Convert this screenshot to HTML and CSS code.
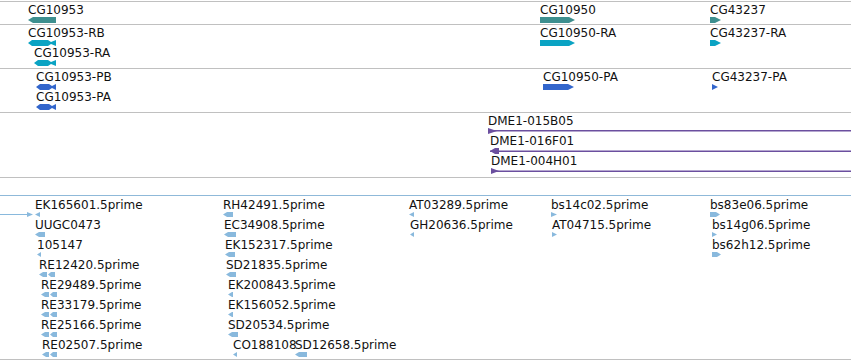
FILE: index.html
```html
<!DOCTYPE html>
<html>
<head>
<meta charset="utf-8">
<link rel="stylesheet" href="styles.css">
</head>
<body>
<div class="view">
  <div class="track t1">
    <div class="lane">
      <div class="feat" style="left:28px"><span class="lbl">CG10953</span><svg class="g gene" width="28" height="6"><polygon points="0,3 5,0 28,0 28,6 5,6"/></svg></div>
      <div class="feat" style="left:540px"><span class="lbl">CG10950</span><svg class="g gene" width="35" height="6"><polygon points="0,0 29,0 35,3 29,6 0,6"/></svg></div>
      <div class="feat" style="left:710px"><span class="lbl">CG43237</span><svg class="g gene" width="11" height="6"><polygon points="0,0 5,0 11,3 5,6 0,6"/></svg></div>
    </div>
  </div>
  <div class="track t2">
    <div class="lane">
      <div class="feat" style="left:28px"><span class="lbl">CG10953-RB</span><svg class="g tx" width="28" height="6"><polygon points="0,3 4,0 20,0 23,2 28,0 28,6 23,4 20,6 4,6"/></svg></div>
      <div class="feat" style="left:540px"><span class="lbl">CG10950-RA</span><svg class="g tx" width="35" height="6"><polygon points="0,0 29,0 35,3 29,6 0,6"/></svg></div>
      <div class="feat" style="left:710px"><span class="lbl">CG43237-RA</span><svg class="g tx" width="11" height="6"><polygon points="0,0 5,0 11,3 5,6 0,6"/></svg></div>
    </div>
    <div class="lane">
      <div class="feat" style="left:34px"><span class="lbl">CG10953-RA</span><svg class="g tx" width="22" height="6"><polygon points="0,3 4,0 14,0 17,2 22,0 22,6 17,4 14,6 4,6"/></svg></div>
    </div>
  </div>
  <div class="track t3">
    <div class="lane">
      <div class="feat" style="left:36px"><span class="lbl">CG10953-PB</span><svg class="g pep" width="20" height="6"><polygon points="0,3 4,0 13,0 16,2 20,0 20,6 16,4 13,6 4,6"/></svg></div>
      <div class="feat" style="left:543px"><span class="lbl">CG10950-PA</span><svg class="g pep" width="31" height="6"><polygon points="0,0 25,0 31,3 25,6 0,6"/></svg></div>
      <div class="feat" style="left:712px"><span class="lbl">CG43237-PA</span><svg class="g pep" width="6" height="6"><polygon points="0,0 6,3 0,6"/></svg></div>
    </div>
    <div class="lane">
      <div class="feat" style="left:36px"><span class="lbl">CG10953-PA</span><svg class="g pep" width="20" height="6"><polygon points="0,3 4,0 13,0 16,2 20,0 20,6 16,4 13,6 4,6"/></svg></div>
    </div>
  </div>
  <div class="track t4">
    <div class="lane">
      <div class="feat wide" style="left:488px"><span class="lbl">DME1-015B05</span><svg class="g dme" width="363" height="6"><rect x="0" y="2" width="363" height="1.5"/><polygon points="0,0 9,3 0,6"/></svg></div>
    </div>
    <div class="lane">
      <div class="feat wide" style="left:490px"><span class="lbl">DME1-016F01</span><svg class="g dme" width="361" height="6"><rect x="0" y="2.5" width="361" height="1.5"/><polygon points="0,3 5,0 9,0 9,6 5,6"/></svg></div>
    </div>
    <div class="lane">
      <div class="feat wide" style="left:491px"><span class="lbl">DME1-004H01</span><svg class="g dme" width="360" height="6"><rect x="0" y="2.5" width="360" height="1.5"/><polygon points="0,0 8,3 0,6"/></svg></div>
    </div>
  </div>
  <div class="gap"></div>
  <div class="track t5">
    <div class="lane">
      <div class="feat" style="left:0px"><span class="lbl"></span><svg class="g est" width="34" height="5"><rect x="0" y="2" width="28" height="1"/><polygon points="27,0 33,2.5 27,5"/></svg></div>
      <div class="feat" style="left:35px"><span class="lbl">EK165601.5prime</span><svg class="g est" width="5" height="5"><polygon points="0,2.5 5,0 5,5"/></svg></div>
      <div class="feat" style="left:223px"><span class="lbl">RH42491.5prime</span><svg class="g est" width="10" height="5"><polygon points="0,2.5 4,0 10,0 10,5 4,5"/></svg></div>
      <div class="feat" style="left:409px"><span class="lbl">AT03289.5prime</span><svg class="g est" width="5" height="5"><polygon points="0,2.5 5,0 5,5"/></svg></div>
      <div class="feat" style="left:551px"><span class="lbl">bs14c02.5prime</span><svg class="g est" width="6" height="5"><polygon points="0,0 6,2.5 0,5"/></svg></div>
      <div class="feat" style="left:710px"><span class="lbl">bs83e06.5prime</span><svg class="g est" width="10" height="5"><polygon points="0,0 6,0 10,2.5 6,5 0,5"/></svg></div>
    </div>
    <div class="lane">
      <div class="feat" style="left:35px"><span class="lbl">UUGC0473</span><svg class="g est" width="10" height="5"><polygon points="0,2.5 4,0 10,0 10,5 4,5"/></svg></div>
      <div class="feat" style="left:224px"><span class="lbl">EC34908.5prime</span><svg class="g est" width="12" height="5"><polygon points="0,2.5 4,0 12,0 12,5 4,5"/></svg></div>
      <div class="feat" style="left:410px"><span class="lbl">GH20636.5prime</span><svg class="g est" width="4" height="5"><polygon points="0,2.5 4,0 4,5"/></svg></div>
      <div class="feat" style="left:552px"><span class="lbl">AT04715.5prime</span><svg class="g est" width="5" height="5"><polygon points="0,0 5,2.5 0,5"/></svg></div>
      <div class="feat" style="left:712px"><span class="lbl">bs14g06.5prime</span><svg class="g est" width="5" height="5"><polygon points="0,0 5,2.5 0,5"/></svg></div>
    </div>
    <div class="lane">
      <div class="feat" style="left:37px"><span class="lbl">105147</span><svg class="g est" width="4" height="5"><polygon points="0,2.5 4,0 4,5"/></svg></div>
      <div class="feat" style="left:225px"><span class="lbl">EK152317.5prime</span><svg class="g est" width="10" height="5"><polygon points="0,2.5 4,0 10,0 10,5 4,5"/></svg></div>
      <div class="feat" style="left:712px"><span class="lbl">bs62h12.5prime</span><svg class="g est" width="9" height="5"><polygon points="0,0 5,0 9,2.5 5,5 0,5"/></svg></div>
    </div>
    <div class="lane">
      <div class="feat" style="left:39px"><span class="lbl">RE12420.5prime</span><svg class="g est" width="16" height="5"><polygon points="0,2.5 4,0 8,0 8,5 4,5"/><polygon points="9,2.5 12,0 16,0 16,5 12,5"/></svg></div>
      <div class="feat" style="left:226px"><span class="lbl">SD21835.5prime</span><svg class="g est" width="10" height="5"><polygon points="0,2.5 4,0 10,0 10,5 4,5"/></svg></div>
    </div>
    <div class="lane">
      <div class="feat" style="left:41px"><span class="lbl">RE29489.5prime</span><svg class="g est" width="16" height="5"><polygon points="0,2.5 4,0 8,0 8,5 4,5"/><polygon points="9,2.5 12,0 16,0 16,5 12,5"/></svg></div>
      <div class="feat" style="left:228px"><span class="lbl">EK200843.5prime</span><svg class="g est" width="5" height="5"><polygon points="0,2.5 4,0 5,0 5,5 4,5"/></svg></div>
    </div>
    <div class="lane">
      <div class="feat" style="left:41px"><span class="lbl">RE33179.5prime</span><svg class="g est" width="16" height="5"><polygon points="0,2.5 4,0 8,0 8,5 4,5"/><polygon points="9,2.5 12,0 16,0 16,5 12,5"/></svg></div>
      <div class="feat" style="left:228px"><span class="lbl">EK156052.5prime</span><svg class="g est" width="5" height="5"><polygon points="0,2.5 4,0 5,0 5,5 4,5"/></svg></div>
    </div>
    <div class="lane">
      <div class="feat" style="left:41px"><span class="lbl">RE25166.5prime</span><svg class="g est" width="16" height="5"><polygon points="0,2.5 4,0 8,0 8,5 4,5"/><polygon points="9,2.5 12,0 16,0 16,5 12,5"/></svg></div>
      <div class="feat" style="left:228px"><span class="lbl">SD20534.5prime</span><svg class="g est" width="10" height="5"><polygon points="0,2.5 4,0 10,0 10,5 4,5"/></svg></div>
    </div>
    <div class="lane">
      <div class="feat" style="left:42px"><span class="lbl">RE02507.5prime</span><svg class="g est" width="15" height="5"><polygon points="0,2.5 4,0 7,0 7,5 4,5"/><polygon points="8,2.5 11,0 15,0 15,5 11,5"/></svg></div>
      <div class="feat" style="left:233px"><span class="lbl">CO188108</span><svg class="g est" width="4" height="5"><polygon points="0,2.5 4,0 4,5"/></svg></div>
      <div class="feat" style="left:295px"><span class="lbl">SD12658.5prime</span><svg class="g est" width="12" height="5"><polygon points="0,2.5 4,0 12,0 12,5 4,5"/></svg></div>
    </div>
  </div>
</div>
</body>
</html>
```
FILE: styles.css
```css
html, body {
  margin: 0;
  padding: 0;
  background: #ffffff;
}
body {
  padding-top: 1px;
  font-family: "DejaVu Sans", "Liberation Sans", sans-serif;
  color: #111111;
  overflow: hidden;
}
.view {
  width: 851px;
}
.track {
  border-bottom: 1px solid #c0c0c0;
  display: flex;
  flex-direction: column;
}
.t1 {
  border-top: 1px solid #c0c0c0;
  height: 22px;
}
.t2 { height: 43px; }
.t3 { height: 43px; }
.t4 { height: 64px; }
.gap { height: 17px; }
.t5 {
  border-top: 1px solid #8fb9d9;
  height: 162px;
  padding-top: 1px;
}
.lane {
  position: relative;
  height: 20px;
  flex: none;
}
.feat {
  position: absolute;
  top: 0;
  display: flex;
  flex-direction: column;
  align-items: flex-start;
}
.feat.wide { right: 0; }
.lbl {
  font-size: 12px;
  line-height: 14px;
  height: 14px;
  white-space: nowrap;
  margin-top: 1px;
}
.g {
  display: block;
  flex: none;
  overflow: visible;
}
.gene { fill: #3d8f8f; }
.tx { fill: #0aa3c3; }
.pep { fill: #3366cc; }
.dme { fill: #6b4f9f; }
.est { fill: #89b9dd; }
```
